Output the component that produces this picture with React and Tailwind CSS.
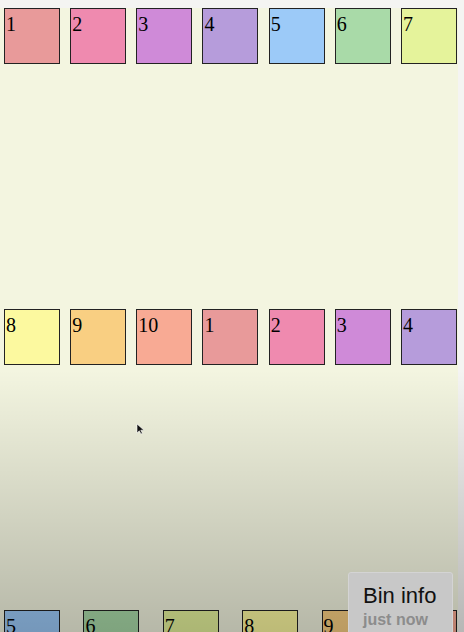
import React from 'react';

// colours sampled per number (1..10)
const colors = {
  1: '#e89a9a',
  2: '#ef8aaf',
  3: '#cf8ad8',
  4: '#b69cdb',
  5: '#9ccaf8',
  6: '#a9daa8',
  7: '#e5f39b',
  8: '#fcf99f',
  9: '#f9cf82',
  10: '#f8aa94',
};

const boxes = [...Array(20)].map((_, i) => (i % 10) + 1);

const Box = ({ n }) => (
  <div
    className="w-14 h-14 border border-[#222] text-[20px] leading-normal text-black font-['Liberation_Serif',serif] pl-px"
    style={{ backgroundColor: colors[n] }}
  >
    {n}
  </div>
);

const Cursor = () => (
  <svg width="9" height="12" viewBox="0 0 9 12" className="absolute left-[136px] top-[423px]">
    <path d="M1 1 L1 10 L3.3 7.8 L5 11 L6.4 10.3 L4.8 7.2 L8 7.2 Z" fill="#111" stroke="#fff" strokeWidth="0.6" />
  </svg>
);

export default function App() {
  return (
    <div className="relative h-[632px] w-[464px] overflow-hidden bg-[#f4f4f2] pt-2">
      <div className="w-[458px] h-full bg-[#f3f5e0] pl-[4px] pr-px flex flex-wrap justify-between content-start gap-x-[9px] gap-y-[245px]">
        {boxes.map((n, i) => (
          <Box key={i} n={n} />
        ))}
      </div>

      {/* darkening fade toward the bottom */}
      <div className="pointer-events-none absolute left-0 right-0 top-[370px] bottom-0 bg-gradient-to-b from-transparent to-black/25" />

      <Cursor />

      {/* Bin info badge */}
      <div className="absolute left-[348px] top-[572px] w-[105px] h-[70px] rounded-[3px] bg-[#c8c8c8] border border-[#d4d4d4] pl-[14px] pt-[10px] font-['Liberation_Sans',Arial,sans-serif]">
        <div className="text-[22px] leading-[26px] text-[#111]">Bin info</div>
        <div className="text-[16px] leading-[22px] font-bold text-[#8c8c8c]">just now</div>
      </div>
    </div>
  );
}
